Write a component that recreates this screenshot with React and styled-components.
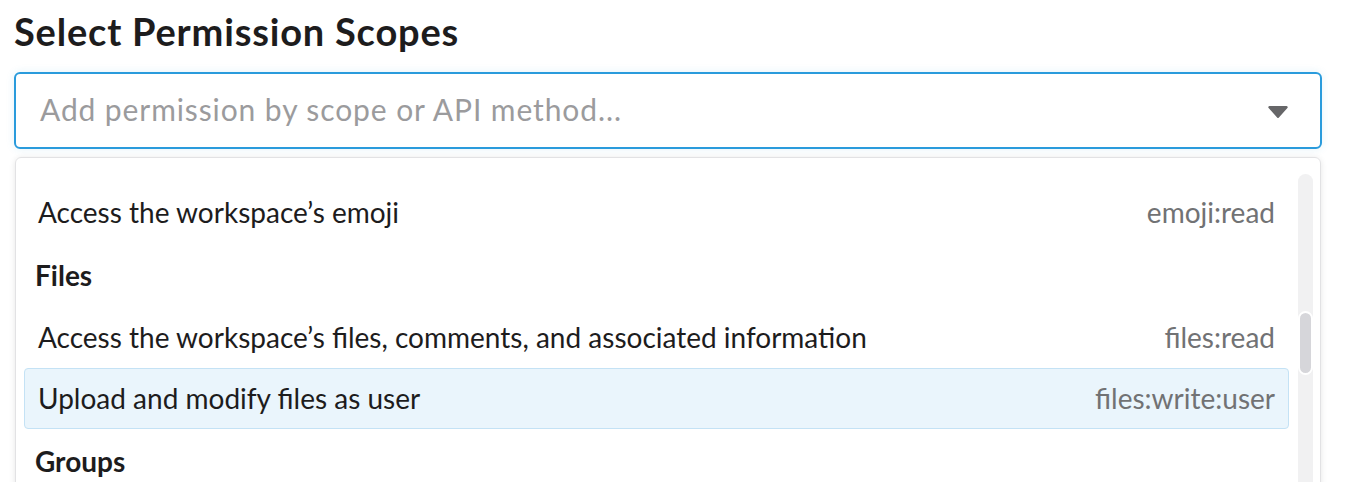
import React from "react";
import styled, { createGlobalStyle } from "styled-components";

const GlobalStyle = createGlobalStyle`
  html, body {
    margin: 0;
    padding: 0;
    background: #fff;
    overflow: hidden;
  }
  body {
    font-family: Lato, "Open Sans", "Liberation Sans", sans-serif;
    color: #1d1c1d;
  }
`;

const sections = [
  {
    items: [{ label: "Access the workspace’s emoji", scope: "emoji:read" }],
  },
  {
    title: "Files",
    items: [
      {
        label:
          "Access the workspace’s files, comments, and associated information",
        scope: "files:read",
      },
      {
        label: "Upload and modify files as user",
        scope: "files:write:user",
        active: true,
      },
    ],
  },
  { title: "Groups", items: [] },
];

const ScopeItem = ({ label, scope, active }) => (
  <Item active={active}>
    <ItemLabel>{label}</ItemLabel>
    <ItemScope>{scope}</ItemScope>
  </Item>
);

const App = () => {
  return (
    <Wrapper>
      <GlobalStyle />
      <Title>Select Permission Scopes</Title>
      <SelectBox>
        <Placeholder>Add permission by scope or API method...</Placeholder>
        <Caret viewBox="0 0 20 12">
          <path d="M1.5 0h17a1.2 1.2 0 0 1 .9 2L10.9 11.4a1.2 1.2 0 0 1-1.8 0L.6 2A1.2 1.2 0 0 1 1.5 0z" />
        </Caret>
      </SelectBox>
      <Menu>
        <List>
          {sections.map((section, i) => (
            <React.Fragment key={i}>
              {section.title && <GroupTitle>{section.title}</GroupTitle>}
              {section.items.map((item) => (
                <ScopeItem key={item.scope} {...item} />
              ))}
            </React.Fragment>
          ))}
        </List>
        <ScrollTrack>
          <ScrollThumb />
        </ScrollTrack>
      </Menu>
    </Wrapper>
  );
};

const Wrapper = styled.div`
  width: 1308px;
  margin-left: 14px;
  padding-top: 9px;
`;

const Title = styled.h1`
  margin: 0 0 19px;
  font-size: 38px;
  line-height: 44px;
  letter-spacing: 0.8px;
  font-weight: 700;
  color: #1d1c1d;
`;

const SelectBox = styled.div`
  box-sizing: border-box;
  height: 77px;
  display: flex;
  align-items: center;
  padding: 0 32px 0 24px;
  border: 2px solid #2a9bdc;
  border-radius: 6px;
  box-shadow: 0 0 8px rgba(29, 155, 209, 0.12);
`;

const Placeholder = styled.div`
  flex: 1;
  margin-top: -3px;
  font-size: 30px;
  letter-spacing: 0.9px;
  color: #9b9b9d;
`;

const Caret = styled.svg`
  width: 20px;
  height: 12px;
  margin-top: 2px;
  fill: #666668;
`;

const Menu = styled.div`
  box-sizing: border-box;
  display: flex;
  height: 360px;
  margin: 8px 1px 0;
  border: 1px solid #e2e2e4;
  border-radius: 6px;
  box-shadow: 0 1px 6px rgba(0, 0, 0, 0.1);
  overflow: hidden;
`;

const List = styled.div`
  flex: 1;
  padding: 24px 0 0 8px;
`;

const GroupTitle = styled.div`
  box-sizing: border-box;
  height: 64px;
  display: flex;
  align-items: center;
  padding-left: 11px;
  font-size: 28px;
  font-weight: 700;
  color: #1d1c1d;
`;

const Item = styled.div`
  box-sizing: border-box;
  height: 61px;
  display: flex;
  align-items: center;
  padding: 0 13px;
  border: 1px solid ${({ active }) => (active ? "#c4e2f5" : "transparent")};
  border-radius: 4px;
  background: ${({ active }) => (active ? "#eaf5fc" : "transparent")};
  font-size: 28px;
`;

const ItemLabel = styled.div`
  flex: 1;
  margin-top: -2px;
  color: #1d1c1d;
`;

const ItemScope = styled.div`
  margin-top: -2px;
  color: #717274;
`;

const ScrollTrack = styled.div`
  width: 15px;
  margin: 16px 7px 0 9px;
  border-radius: 8px 8px 0 0;
  background: #f1f1f2;
`;

const ScrollThumb = styled.div`
  box-sizing: border-box;
  height: 64px;
  margin-top: 137px;
  border: 2px solid #fff;
  border-radius: 8px;
  background: #d6d6da;
`;

export default App;
